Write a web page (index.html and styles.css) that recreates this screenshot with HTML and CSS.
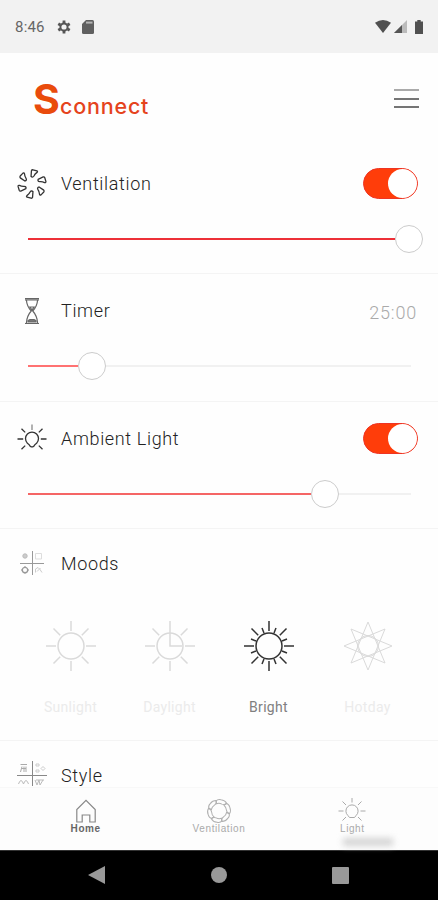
FILE: index.html
```html
<!DOCTYPE html>
<html lang="en">
<head>
<meta charset="utf-8">
<title>Sconnect</title>
<link rel="stylesheet" href="styles.css">
</head>
<body>
<svg class="defs" width="0" height="0">
  <defs>
    <g id="rays8">
      <path d="M0-25V-15M0 15V25M-25 0H-15M15 0H25M-17.5-17.5L-10.8-10.8M17.5-17.5L10.8-10.8M-17.5 17.5L-10.8 10.8M17.5 17.5L10.8 10.8"/>
    </g>
    <path id="blade" d="M-2-7.4L-2.4-13Q-2.2-14.2-1-14.2L3-13.8Q4.2-13.4 3.4-12.2Q1.4-10.4.8-8.2Q.2-6.8-.8-6.8Z"/>
    <path id="petal" d="M-4.2-6.4L-5.4-8.8Q-4.4-11.4-1-11.4Q3-12 5.4-9.4Q4-7 1-7.4Q-2-8-4.2-6.4Z"/>
  </defs>
</svg>
<div class="screen">
  <header class="status">
    <span class="clock">8:46</span>
    <svg class="gear" width="14" height="14" viewBox="-7 -7 14 14"><circle r="3.6" fill="none" stroke="#555" stroke-width="2"/><path d="M0-6.6V-4M0 6.6V4M-5.7-3.3L-3.6-2M5.7-3.3L3.6-2M-5.7 3.3L-3.6 2M5.7 3.3L3.6 2" stroke="#555" stroke-width="2.8"/></svg>
    <svg class="sd" width="12" height="14" viewBox="0 0 12 14"><path d="M4 0H10.5Q12 0 12 1.5V12.5Q12 14 10.5 14H1.5Q0 14 0 12.5V4Z" fill="#606060"/><path d="M4 2.6H10.5" stroke="#b5b5b5" stroke-width="2"/></svg>
    <span class="spacer"></span>
    <svg class="wifi" width="16" height="13" viewBox="0 0 16 13"><path d="M0 2.8Q8-2.8 16 2.8L8 13Z" fill="#505050"/></svg>
    <svg class="signal" width="13" height="13" viewBox="0 0 13 13"><path d="M0 13L13 0V13Z" fill="#bbb"/><path d="M0 13L8 5V13Z" fill="#555"/></svg>
    <svg class="battery" width="8" height="14" viewBox="0 0 8 14"><path d="M0 1.5H2.3V0H5.7V1.5H8V14H0Z" fill="#505050"/></svg>
  </header>

  <div class="brandbar">
    <div class="logo"><span class="logo-s">S</span><span class="logo-rest">connect</span></div>
    <div class="menu"><i></i><i></i><i></i></div>
  </div>

  <section class="control">
    <div class="row">
      <svg class="icon" width="32" height="32" viewBox="-16 -16 32 32" fill="none" stroke="#333" stroke-width="1.3"><use href="#blade" transform="rotate(8)"/><use href="#blade" transform="rotate(68)"/><use href="#blade" transform="rotate(128)"/><use href="#blade" transform="rotate(188)"/><use href="#blade" transform="rotate(248)"/><use href="#blade" transform="rotate(308)"/></svg>
      <h2>Ventilation</h2>
      <span class="toggle"><i></i></span>
    </div>
    <div class="slider full"><span class="fill"></span><span class="thumb"></span><span class="rest"></span></div>
  </section>

  <section class="control">
    <div class="row">
      <svg class="icon" width="32" height="32" viewBox="-16 -16 32 32" fill="none" stroke="#666" stroke-width="1.2"><path d="M-7-12.3H7M-7-11H7M-7 12.5H7M-5.6-11Q-5.2-5-.8 0Q-5.2 5-5.6 12M5.6-11Q5.2-5 .8 0Q5.2 5 5.6 12M-2-4H2L0-1Z"/><path d="M-4 11V9.5L-2 8.5H2L4 9.5V11Z" fill="#777"/></svg>
      <h2>Timer</h2>
      <span class="time">25:00</span>
    </div>
    <div class="slider short"><span class="fill"></span><span class="thumb"></span><span class="rest"></span></div>
  </section>

  <section class="control">
    <div class="row">
      <svg class="icon" width="32" height="32" viewBox="-16 -16 32 32" fill="none" stroke="#333" stroke-width="1.3"><path d="M-2 8Q-2.6 6.6-4.6 5.2A6.5 6.5 0 1 1 4.6 5.2Q2.6 6.6 2 8L.8 8.8H-.8Z"/><path d="M-14.5 1H-8.8M8.8 1H14.5M-10.5-9.3L-6.8-5.6M10.5-9.3L6.8-5.6M-10.5 11.3L-6.8 7.6M10.5 11.3L6.8 7.6"/><path d="M0-13.5V-8" stroke="#888"/></svg>
      <h2>Ambient Light</h2>
      <span class="toggle"><i></i></span>
    </div>
    <div class="slider long"><span class="fill"></span><span class="thumb"></span><span class="rest"></span></div>
  </section>

  <section class="moods">
    <div class="row">
      <svg class="icon moods-icon" width="32" height="32" viewBox="-16 -16 32 32" fill="none" stroke="#bbb"><path d="M.5-12V12M-12 .5H12" stroke="#999"/><circle cx="-7" cy="-7" r="2.2" fill="#ccc"/><path d="M3.5-9.5H9.5V-4H3.5Z" stroke="#ddd"/><circle cx="-7" cy="7" r="2.7" stroke="#999" stroke-width="1.3"/><path d="M-7 3V4M-7 10V11M-11 7H-10M-4 7H-3" stroke="#999"/><path d="M3.5 9.5V6L6 4.5L8 6.5L10 9.5M5 8.5L8.5 5" stroke="#ccc"/></svg>
      <h2>Moods</h2>
    </div>
    <div class="options">
      <div class="option"><svg width="52" height="52" viewBox="-26 -26 52 52"><circle r="13"/><use href="#rays8"/></svg><span>Sunlight</span></div>
      <div class="option"><svg width="52" height="52" viewBox="-26 -26 52 52"><circle r="13"/><use href="#rays8"/><path d="M0-15V0H12"/></svg><span>Daylight</span></div>
      <div class="option selected"><svg width="52" height="52" viewBox="-26 -26 52 52"><circle r="13"/><use href="#rays8"/><path d="M-5-13L-7-18M5-13L7-18M-5 13L-7 18M5 13L7 18M-13-5L-18-7M13-5L18-7M-13 5L-18 7M13 5L18 7"/></svg><span>Bright</span></div>
      <div class="option hot"><svg width="52" height="52" viewBox="-26 -26 52 52"><circle r="10.5"/><path d="M0-24L17 17L-24 0L17-17L0 24L-17-17L24 0L-17 17Z"/></svg><span>Hotday</span></div>
    </div>
  </section>

  <section class="style">
    <div class="row">
      <svg class="icon" width="32" height="32" viewBox="-16 -16 32 32" fill="none" stroke="#bbb"><path d="M-15 .5H15M.5-14V11" stroke="#888"/><path d="M-11.5-10.5H-5M-10-8.5L-11.5-3M-8-8.5V-3M-6-8.5V-3M-10-6.5H-6" stroke="#aaa"/><path d="M4-11H7V-9H4ZM4-5H7V-3H4ZM9-6.5L11-8.5L13-6.5L11-4.5Z" stroke="#ccc"/><path d="M-13.5 9Q-11 2-8.5 9Q-6 2-3.5 9M3 5L5 10L7 5L8 10L11 5M4 5H12" stroke="#bbb"/></svg>
      <h2>Style</h2>
    </div>
  </section>

  <nav class="tabs">
    <div class="tab active"><svg width="28" height="28" viewBox="-14 -14 28 28" fill="none" stroke="#888" stroke-width="1.2"><path d="M-9.2 11V-1.5L0-10.7L9.2-1.5V11H3.8V4H-3.8V11Z"/></svg><span>Home</span></div>
    <div class="tab"><svg width="28" height="28" viewBox="-14 -14 28 28" fill="none" stroke="#b0b0b0"><use href="#petal" transform="rotate(15)"/><use href="#petal" transform="rotate(75)"/><use href="#petal" transform="rotate(135)"/><use href="#petal" transform="rotate(195)"/><use href="#petal" transform="rotate(255)"/><use href="#petal" transform="rotate(315)"/></svg><span>Ventilation</span></div>
    <div class="tab light"><svg width="28" height="28" viewBox="-14 -14 28 28" fill="none" stroke="#aaa"><path d="M-2.5 6.5L-4 4.6A6.1 6.1 0 1 1 4 4.6L2.5 6.5Z"/><path d="M0-13V-8.5M-13.5 0H-8.5M8.5 0H13.5M-9.5-9.5L-6-6M9.5-9.5L6-6M-9.5 9.5L-6 6M9.5 9.5L6 6"/></svg><span>Light</span></div>
    <i class="ghost"></i>
  </nav>

  <footer class="system">
    <svg width="18" height="20" viewBox="0 0 18 20"><path d="M0 10L17 1V19Z" fill="#999"/></svg>
    <svg width="18" height="18" viewBox="0 0 18 18"><circle cx="9" cy="9" r="8" fill="#999"/></svg>
    <svg width="17" height="17" viewBox="0 0 17 17"><rect width="17" height="17" rx="1" fill="#999"/></svg>
  </footer>
</div>
</body>
</html>
```
FILE: styles.css
```css
* { box-sizing: border-box; }
body { margin: 0; background: #fff; font-family: Roboto, "Liberation Sans", sans-serif; }
.defs { position: absolute; }
.screen { width: 438px; height: 900px; overflow: hidden; display: flex; flex-direction: column; background: #fefefe; }
svg { display: block; flex: none; }

.status { flex: none; height: 53px; background: #f2f2f2; display: flex; align-items: center; padding: 0 15px 0 15px; color: #666; }
.clock { width: 42px; font-size: 15px; letter-spacing: .2px; line-height: 20px; padding-top: 1px; }
.sd { margin-left: 11px; }
.spacer { flex: 1; }
.signal { margin-left: 3px; }
.battery { margin-left: 8px; }

.brandbar { flex: none; height: 94px; display: flex; justify-content: space-between; padding: 21px 19px 0 33px; }
.logo { display: flex; align-items: baseline; height: 50px; line-height: 50px; color: #e94b0c; font-family: Inter, sans-serif; }
.logo-s { font-size: 41px; font-weight: 700; width: 27px; }
.logo-rest { font-size: 21.5px; font-weight: 500; letter-spacing: .8px; color: #e5431c; }
.menu { width: 25px; padding-top: 15px; display: flex; flex-direction: column; gap: 6.5px; }
.menu i { height: 2px; background: #757575; }
.menu i:first-child { background: #aaa; }

.control { flex: none; height: 127.4px; border-bottom: 1px solid #f4f4f4; padding-top: 20px; }
.row { height: 33px; display: flex; align-items: center; padding: 0 20px 0 16px; }
.icon { margin-right: 13px; }
h2 { margin: 0; font-size: 18px; font-weight: 300; letter-spacing: .65px; color: #222; flex: 1; }
.time { font-size: 18px; font-weight: 300; letter-spacing: .8px; color: #aaa; margin-right: 1px; padding-top: 3px; }
.toggle { width: 55px; height: 31px; border-radius: 16px; background: #ff3d0a; display: flex; justify-content: flex-end; border: 1px solid #ee3424; }
.toggle i { width: 29px; height: 29px; border-radius: 50%; background: #fff; }

.slider { margin: 25px 27px 0 28px; height: 28px; display: flex; align-items: center; }
.fill { height: 2px; background: #ed3038; }
.thumb { flex: none; width: 28px; height: 28px; border: 1.5px solid #ccc; border-radius: 50%; background: #fff; }
.rest { flex: 1; height: 2px; background: #f1f1f1; }
.full { margin-right: 14px; }
.full .fill { width: 367px; }
.full .rest { display: none; }
.short .fill { width: 50px; background: #ff7272; }
.long .fill { width: 283px; background: #f56565; }

.moods { flex: none; height: 211.6px; border-bottom: 1px solid #f4f4f4; padding-top: 17.6px; }
.options { display: flex; padding: 40px 21px 0; }
.option { flex: 1; display: flex; flex-direction: column; align-items: center; font-size: 14px; letter-spacing: .3px; color: #ebebeb; gap: 27px; }
.option span { line-height: 16px; }
.option svg { fill: none; stroke: #dadada; stroke-width: 1.5; }
.option.selected { color: #808080; }
.option.selected svg { stroke: #333; }
.option.hot svg { stroke-width: 1; }

.style { flex: none; height: 46px; padding-top: 18px; }
.tabs { flex: none; position: relative; height: 63px; border-top: 1px solid #f8f8f8; display: flex; padding: 9px 19px 0; background: #fdfdfd; }
.tab { flex: 1; display: flex; flex-direction: column; align-items: center; font: 10px/12px "Liberation Sans", sans-serif; letter-spacing: .6px; color: #aaa; }
.tab span { margin-top: -2px; position: relative; }
.tab.active { color: #666; font-weight: 700; }
.ghost { position: absolute; left: 343px; top: 50px; width: 50px; height: 8px; background: #d4d4d4; filter: blur(3px); }
.system { flex: 1; background: #000; display: flex; align-items: center; justify-content: space-between; padding: 0 89px 0 88px; border-top: 1px solid #333; }
```
